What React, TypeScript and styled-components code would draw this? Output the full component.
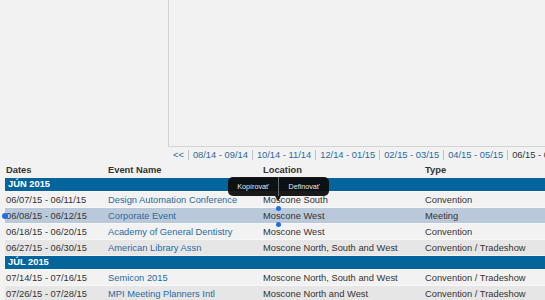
import React from "react";
import styled, { createGlobalStyle } from "styled-components";

const Global = createGlobalStyle`
  html, body { margin: 0; padding: 0; background: #f2f2f2; }
  body { font-family: "Liberation Sans", Arial, sans-serif; }
`;

const Page = styled.div`
  position: relative;
  width: 545px;
  height: 300px;
  overflow: hidden;
  white-space: nowrap;
  font-size: 9.33px;
  color: #333;
`;

const ChartFrame = styled.div`
  margin-left: 168px;
  width: 500px;
  height: 146px;
  border-left: 1px solid #d4d4d4;
  border-bottom: 1px solid #d4d4d4;
  background: #f2f2f2;
`;

const RangeNav = styled.div`
  display: flex;
  align-items: center;
  height: 16px;
  padding-left: 173px;
`;

const RangeItem = styled.a<{ $current?: boolean; $first?: boolean }>`
  display: inline-flex;
  align-items: center;
  height: 10px;
  line-height: 10px;
  padding: 0 4px;
  padding-left: ${(p) => (p.$first ? "0" : "4px")};
  border-left: ${(p) => (p.$first ? "none" : "1px solid #c4c4c4")};
  color: ${(p) => (p.$current ? "#333" : "#2a69a1")};
  text-decoration: none;
`;

const Table = styled.div`
  margin-left: 5px;
`;

const Columns = `
  display: grid;
  grid-template-columns: 102px 155px 162px 1fr;
  align-items: center;
`;

const HeaderRow = styled.div`
  ${Columns}
  height: 14px;
  font-weight: bold;
  color: #333;
`;

const Cell = styled.div`
  padding-left: 1px;
  overflow: hidden;
`;

const GroupRow = styled.div`
  height: 14px;
  box-sizing: border-box;
  border-top: 1px solid #f2f2f2;
  background: #03659c;
  color: #fff;
  font-weight: bold;
  line-height: 13px;
  padding-left: 3px;
`;

const Row = styled.div<{ $alt?: boolean; $selected?: boolean }>`
  ${Columns}
  height: 16px;
  box-sizing: border-box;
  border-top: 1px solid #f8f8f8;
  background: ${(p) => (p.$selected ? "#bac9d9" : p.$alt ? "#e6e6e6" : "#f2f2f2")};
`;

const EventLink = styled.a`
  color: #2a69a1;
  text-decoration: none;
`;

const Tooltip = styled.div`
  position: absolute;
  left: 228px;
  top: 177px;
  width: 101px;
  height: 19px;
  display: flex;
  border-radius: 5px;
  background: rgba(12, 12, 12, 0.94);
  color: #e8e8e8;
  font-size: 7.2px;
`;

const TipButton = styled.div<{ $divider?: boolean }>`
  flex: 1;
  display: flex;
  align-items: center;
  justify-content: center;
  border-left: ${(p) => (p.$divider ? "1px solid #6a6a6a" : "none")};
`;

const TipArrow = styled.div`
  position: absolute;
  left: 47px;
  top: 19px;
  width: 0;
  height: 0;
  border-left: 3px solid transparent;
  border-right: 3px solid transparent;
  border-top: 5px solid rgba(12, 12, 12, 0.94);
`;

const Handle = styled.div<{ $x: number; $y: number; $size: number }>`
  position: absolute;
  left: ${(p) => p.$x - p.$size / 2}px;
  top: ${(p) => p.$y - p.$size / 2}px;
  width: ${(p) => p.$size}px;
  height: ${(p) => p.$size}px;
  border-radius: 50%;
  background: #1f6fe5;
`;

type Ev = { dates: string; name: string; loc: string; type: string; selected?: boolean };

const groups: { label: string; rows: Ev[] }[] = [
  {
    label: "JÚN 2015",
    rows: [
      { dates: "06/07/15 - 06/11/15", name: "Design Automation Conference", loc: "Moscone South", type: "Convention" },
      { dates: "06/08/15 - 06/12/15", name: "Corporate Event", loc: "Moscone West", type: "Meeting", selected: true },
      { dates: "06/18/15 - 06/20/15", name: "Academy of General Dentistry", loc: "Moscone West", type: "Convention" },
      { dates: "06/27/15 - 06/30/15", name: "American Library Assn", loc: "Moscone North, South and West", type: "Convention / Tradeshow" },
    ],
  },
  {
    label: "JÚL 2015",
    rows: [
      { dates: "07/14/15 - 07/16/15", name: "Semicon 2015", loc: "Moscone North, South and West", type: "Convention / Tradeshow" },
      { dates: "07/26/15 - 07/28/15", name: "MPI Meeting Planners Intl", loc: "Moscone North and West", type: "Convention / Tradeshow" },
    ],
  },
];

const ranges = ["08/14 - 09/14", "10/14 - 11/14", "12/14 - 01/15", "02/15 - 03/15", "04/15 - 05/15"];

export default function App() {
  return (
    <>
      <Global />
      <Page>
        <ChartFrame />
        <RangeNav>
          <RangeItem $first href="#">&lt;&lt;</RangeItem>
          {ranges.map((r) => (
            <RangeItem key={r} href="#">{r}</RangeItem>
          ))}
          <RangeItem $current>06/15 - 07/15</RangeItem>
        </RangeNav>
        <Table>
          <HeaderRow>
            <Cell>Dates</Cell>
            <Cell>Event Name</Cell>
            <Cell>Location</Cell>
            <Cell>Type</Cell>
          </HeaderRow>
          {groups.map((g) => (
            <React.Fragment key={g.label}>
              <GroupRow>{g.label}</GroupRow>
              {g.rows.map((r, i) => (
                <Row key={r.dates} $alt={i % 2 === 1} $selected={r.selected}>
                  <Cell>{r.dates}</Cell>
                  <Cell><EventLink href="#">{r.name}</EventLink></Cell>
                  <Cell>{r.loc}</Cell>
                  <Cell>{r.type}</Cell>
                </Row>
              ))}
            </React.Fragment>
          ))}
        </Table>
        <Tooltip>
          <TipButton>Kopírovať</TipButton>
          <TipButton $divider>Definovať</TipButton>
          <TipArrow />
        </Tooltip>
        <Handle $x={5} $y={216} $size={6} />
        <Handle $x={278} $y={208} $size={5} />
        <Handle $x={278} $y={224} $size={5} />
      </Page>
    </>
  );
}
